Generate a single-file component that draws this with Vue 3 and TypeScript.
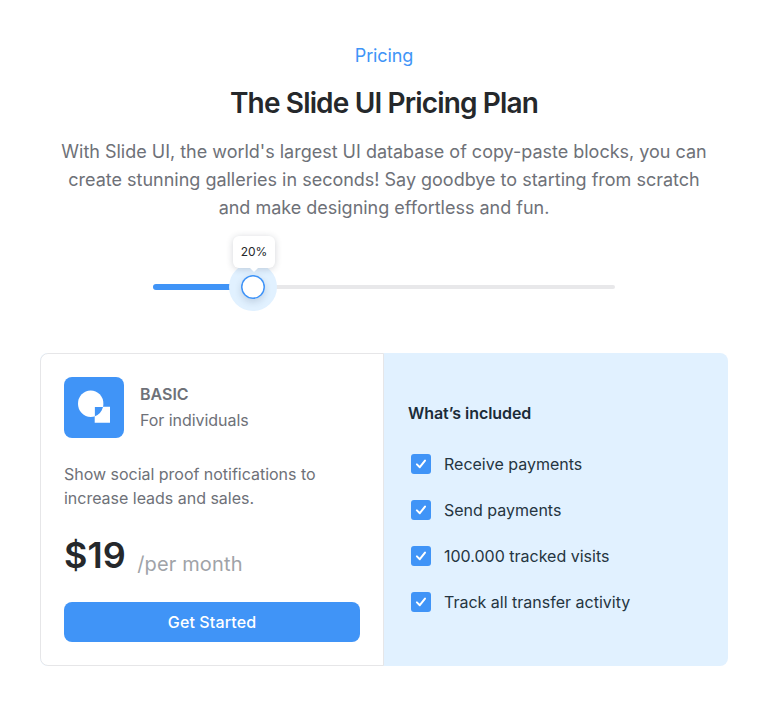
<script setup lang="ts">
import { ref } from 'vue'

const progress = ref<number>(20)
const features: string[] = [
  'Receive payments',
  'Send payments',
  '100.000 tracked visits',
  'Track all transfer activity',
]
</script>

<template>
  <main class="page">
    <header class="intro">
      <p class="eyebrow">Pricing</p>
      <h1>The Slide UI Pricing Plan</h1>
      <p class="lead">
        With Slide UI, the world's largest UI database of copy-paste blocks, you can<br />
        create stunning galleries in seconds! Say goodbye to starting from scratch<br />
        and make designing effortless and fun.
      </p>
    </header>

    <div class="slider">
      <div class="rail"></div>
      <div class="fill"></div>
      <div class="halo"><div class="thumb"></div></div>
      <div class="tip">{{ progress }}%</div>
    </div>

    <section class="card">
      <div class="plan">
        <div class="plan-head">
          <svg class="logo" width="60" height="61" viewBox="0 0 60 61">
            <rect width="60" height="61" rx="8" fill="#4094f7" />
            <ellipse cx="26.7" cy="26.7" rx="12.7" ry="13.3" fill="#fff" />
            <path d="M30.7 29.7H46V45.7H30.7Z" fill="#fff" />
            <path d="M30.9 30.1H39A12.7 13.3 0 0 1 30.9 39.3Z" fill="#4094f7" />
          </svg>
          <div class="plan-name">
            <h2>BASIC</h2>
            <p class="audience">For individuals</p>
          </div>
        </div>
        <p class="desc">Show social proof notifications to<br />increase leads and sales.</p>
        <div class="price"><strong>$19</strong><span>/per month</span></div>
        <button type="button">Get Started</button>
      </div>
      <div class="included">
        <h3>What’s included</h3>
        <ul>
          <li v-for="feature in features" :key="feature">
            <svg width="20" height="20" viewBox="0 0 20 20">
              <rect width="20" height="20" rx="3" fill="#4094f7" />
              <path d="M5.9 10.4L8.8 13.2L14 6.6" fill="none" stroke="#fff" stroke-width="2" stroke-linecap="round" stroke-linejoin="round" />
            </svg>
            <span>{{ feature }}</span>
          </li>
        </ul>
      </div>
    </section>
  </main>
</template>

<style>
body { background: #fff; }
</style>

<style scoped>
* { box-sizing: border-box; margin: 0; padding: 0; }
.page { width: 768px; height: 706px; padding: 42px 40px 0; font-family: Inter, "Liberation Sans", sans-serif; color: #25282b; }
.intro { text-align: center; }
.eyebrow { font-size: 18px; line-height: 28px; letter-spacing: -0.1px; color: #4094f7; }
h1 { margin-top: 13px; font-size: 28px; line-height: 40px; font-weight: 600; letter-spacing: -0.85px; color: #25282b; }
.lead { margin-top: 15px; font-size: 18px; line-height: 28px; color: #6e7178; white-space: nowrap; letter-spacing: -0.01px; }
.slider { position: relative; width: 462px; height: 46px; margin: 42px auto 0; }
.rail, .fill { position: absolute; left: 0; top: 20px; height: 6px; border-radius: 3px; }
.rail { right: 0; height: 4px; top: 21px; background: #e8e8ea; }
.fill { width: 100px; background: #4094f7; }
.halo { position: absolute; left: 76px; top: -1px; width: 48px; height: 48px; border-radius: 50%; background: #e1f1ff; display: flex; align-items: center; justify-content: center; }
.thumb { width: 24px; height: 24px; border-radius: 50%; background: #fff; box-shadow: inset 0 0 0 1.5px #4094f7, 0 3px 7px rgba(30, 50, 80, 0.16); }
.tip { position: absolute; left: 80px; top: -28px; width: 42px; height: 32px; border-radius: 6px; background: #fff; box-shadow: 0 1px 7px rgba(30, 40, 60, 0.2); font-size: 12px; line-height: 32px; text-align: center; }
.tip::after { content: ""; position: absolute; left: 16px; top: 31px; border: 5px solid transparent; border-top-color: #fff; border-bottom: 0; }
.card { display: flex; margin-top: 43px; height: 313px; border-radius: 8px; overflow: hidden; background: #e1f1ff; }
.plan { width: 344px; padding: 23px; background: #fff; border: 1px solid #e6e6e8; border-radius: 8px 0 0 8px; }
.plan-head { display: flex; gap: 16px; align-items: center; height: 61px; }
.plan-name { padding-bottom: 2px; }
h2 { font-size: 16px; line-height: 26px; font-weight: 600; color: #6e7178; }
.audience { font-size: 16px; line-height: 26px; color: #6e7178; letter-spacing: -0.05px; }
.desc { margin-top: 24px; font-size: 16px; line-height: 24px; color: #6e7178; white-space: nowrap; letter-spacing: -0.02px; }
.price { display: flex; align-items: flex-start; margin-top: 21px; height: 48px; }
.price strong { font-size: 36px; line-height: 48px; font-weight: 600; color: #25282b; }
.price span { margin-left: 11.5px; padding-top: 9px; font-size: 20px; line-height: 48px; letter-spacing: 0.15px; color: #a0a3a8; }
button { display: block; width: 296px; height: 40px; margin-top: 23px; border: 0; border-radius: 8px; background: #4094f7; color: #fff; font: 500 16px/40px Inter, sans-serif; letter-spacing: 0.12px; }
.included { flex: 1; padding: 47px 24px 0; }
h3 { font-size: 16px; line-height: 26px; font-weight: 600; letter-spacing: -0.06px; color: #1b2b38; }
ul { list-style: none; margin-top: 25px; }
li { display: flex; align-items: center; gap: 13px; height: 26px; margin-bottom: 20px; padding-left: 3px; font-size: 16px; color: #253541; white-space: nowrap; }
</style>
